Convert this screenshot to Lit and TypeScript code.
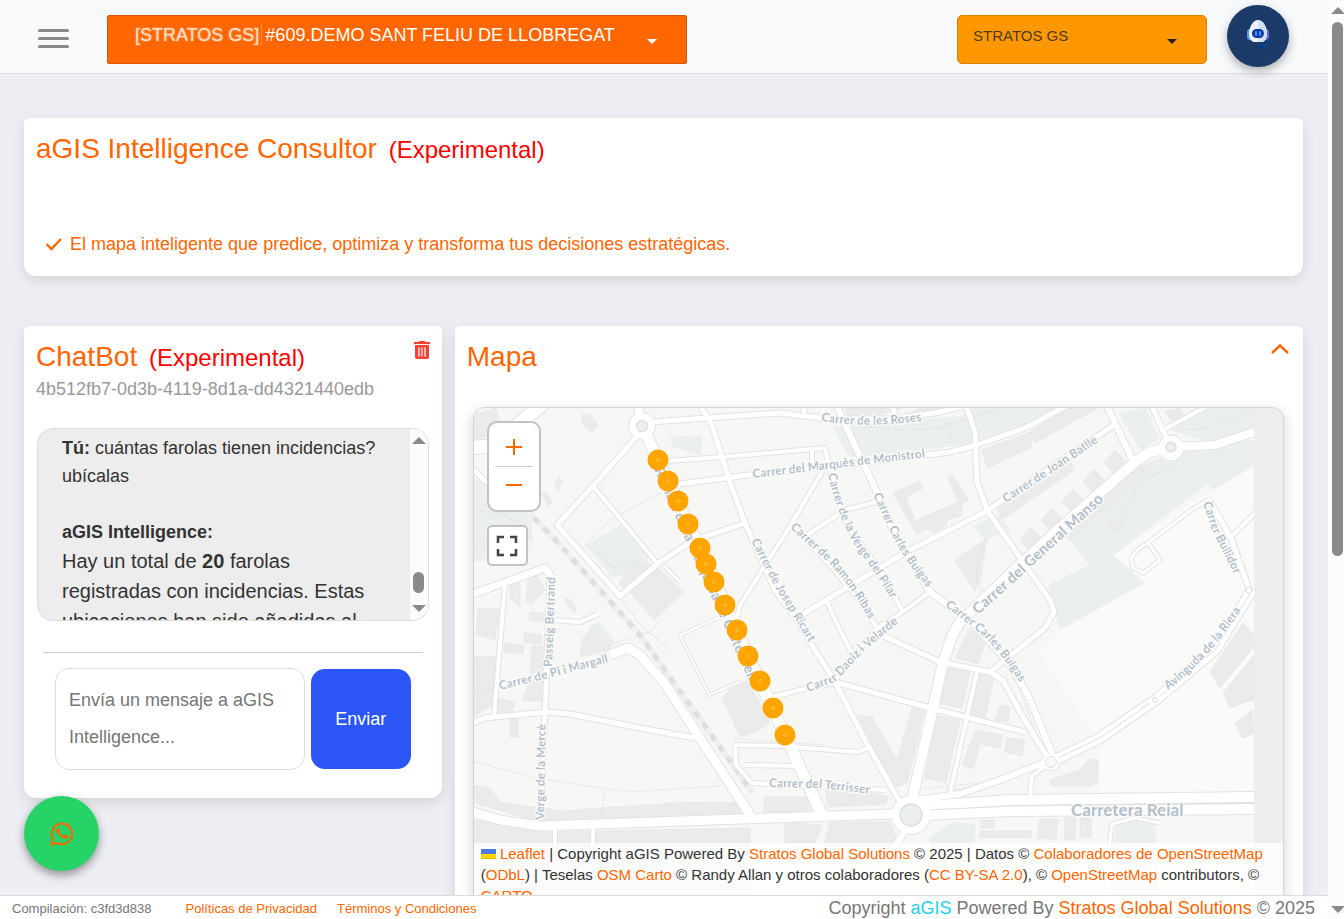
import { LitElement, html, svg, css } from "lit";
import { customElement } from "lit/decorators.js";

type Road = [width: number, d: string];
type Label = [size: number, text: string, d: string];

const PARKS = [
  "M474 478L500 490 532 522 532 540 512 556 474 562Z",
  "M585 545L620 525 650 556 640 575 612 577Z",
  "M670 437L702 435 701 455 688 452 672 446Z",
  "M832 426L858 425 962 416 968 408 1066 408 1030 427 977 443 862 457 848 456Z",
  "M1118 412L1146 408 1160 438 1140 450Z",
  "M1170 430L1208 408 1254 408 1254 430 1205 441Z",
  "M1190 449L1254 440 1254 466 1213 490 1208 484 1113 555 1145 583 1060 630 1048 585 1090 565 1070 540 1148 462Z",
  "M1116 822L1155 820 1160 906 1108 906Z",
  "M930 838L952 822 976 824 974 850 930 850Z",
  "M590 625L600 622 614 640 612 648 600 648Z",
  "M973 526L1000 515 1010 530 985 540Z",
];

const FIELD = "M1254 466L1213 490 1113 555 1145 583 1060 630 1040 654 1098 740 1100 792 1254 792Z";

const BUILDINGS = [
  "M474 444L474 415 496 408 501 426Z",
  "M582 415L590 414 598 425 592 432 582 424Z",
  "M555 485L559 477 563 483 557 491Z",
  "M541 494L547 493 552 502 548 506Z",
  "M655 565L683 592 654 620 630 592Z",
  "M619 583L636 561 650 564 642 575 624 588Z",
  "M748 680L770 722 757 732 740 737 722 698 730 690Z",
  "M478 608L500 608 495 640 476 634Z",
  "M510 585L520 583 520 608 510 598Z",
  "M528 578L538 576 545 590 532 604 526 602Z",
  "M564 600L568 598 577 608 574 613Z",
  "M530 612L547 614 545 622 529 620Z",
  "M504 643L524 645 523 654 504 652Z",
  "M524 633L542 635 542 644 524 642Z",
  "M532 646L545 646 542 701 522 700 530 680Z",
  "M474 656L496 656 492 705 474 716Z",
  "M498 698L515 702 512 712 496 712Z",
  "M510 716L518 716 518 737 510 737Z",
  "M582 640L592 627 612 650 580 657Z",
  "M474 785L490 788 500 802 560 811 600 808 690 802 745 803 748 815 540 822 474 803Z",
  "M474 820L540 832 750 828 752 906 474 906Z",
  "M845 408L902 408 875 416 848 416Z",
  "M912 412L920 408 962 408 925 415Z",
  "M893 493L920 481 923 488 906 497 915 521 958 502 948 477 952 474 969 500 962 503 962 515 947 520 947 525 935 532 925 529 917 535 910 523Z",
  "M955 560L987 538 980 580 975 591Z",
  "M982 450L1031 432 1032 447 987 468Z",
  "M1030 431L1070 408 1098 408 1035 443Z",
  "M995 505L1070 462 1074 470 1003 519Z",
  "M1031 527L1042 539 1031 551 1020 541Z",
  "M1052 508L1063 520 1052 532 1041 521Z",
  "M1073 489L1084 501 1073 513 1062 502Z",
  "M1094 469L1105 481 1094 493 1083 482Z",
  "M1115 450L1126 462 1115 474 1104 463Z",
  "M1066 536L1140 463 1147 467 1070 541Z",
  "M1110 524L1124 514 1126 518 1114 533Z",
  "M1165 412L1180 408 1184 416 1172 421Z",
  "M1243 623L1254 635 1254 647 1220 688 1210 672Z",
  "M1254 655L1254 700 1243 703 1230 708 1223 693Z",
  "M1235 723L1252 710 1254 733 1242 738Z",
  "M1050 780L1080 770 1090 759 1099 760 1097 783 1091 786 1050 786Z",
  "M857 715L872 717 897 760 912 708 925 710 907 783 897 787 890 780Z",
  "M937 716L960 720 946 783 925 778Z",
  "M946 666L970 672 962 708 941 704Z",
  "M975 672L994 677 985 719 970 714Z",
  "M1000 705L1010 707 1008 722 995 720Z",
  "M976 730L1003 735 1000 748 980 744 973 769 962 765Z",
  "M1006 738L1024 740 1022 756 1005 752Z",
  "M955 658L970 628 986 640 978 664Z",
  "M825 787L888 796 886 804 828 807Z",
  "M765 797L806 797 812 812 763 812Z",
  "M785 822L822 825 815 843 785 843Z",
  "M830 822L890 822 905 860 820 860Z",
  "M981 820L994 820 994 828 981 828Z",
  "M980 831L1031 831 1031 838 980 838Z",
  "M1040 819L1058 819 1056 840 1037 838Z",
  "M1065 818L1076 818 1075 840 1065 840Z",
  "M1080 818L1091 818 1091 837 1080 837Z",
];

const PATHS = [
  "M585 545L610 520 662 492",
  "M474 512L500 512 520 525 534 540 525 556 500 558",
  "M474 548L500 530 520 540",
  "M596 552L604 558 612 568 640 562",
  "M860 425L900 430 940 428 1000 408",
  "M945 422L955 445",
  "M1120 512L1145 480 1178 462",
  "M1180 430L1210 428 1254 408",
  "M987 540L978 560 976 580 990 602",
  "M474 762L540 779 630 792 720 786",
  "M605 790L600 820",
  "M610 645L650 632 660 622",
  "M735 738L780 742 825 745",
  "M955 790L990 782 1030 765",
  "M1020 690L1042 750",
  "M620 597L640 625 670 650",
  "M552 828L740 824",
  "M474 692L498 687",
  "M925 788L950 786 1010 780",
];

const ROADS: Road[] = [
  [13, "M466 448L492 446 545 402"],
  [5, "M470 466L484 480 530 512"],
  [8, "M637 402L641 420"],
  [5, "M650 422L750 415 780 413 828 419 890 419 935 413 972 404"],
  [5, "M804 402L804 413"],
  [5, "M638 435L593 486 557 525 620 596 660 562 692 541 745 523"],
  [4, "M593 486L657 563"],
  [3, "M664 566L680 582"],
  [5, "M698 402L712 425 722 457 732 488 745 523 775 590 797 620 815 650 835 682 865 740 900 802"],
  [4, "M668 461L722 457 825 448 829 466"],
  [4, "M812 449L812 466"],
  [5, "M680 484L740 476 860 463 950 452 977 445 1025 428 1070 404"],
  [4, "M829 464L838 500 850 530 880 570 903 612"],
  [6, "M835 402L857 450 876 490 895 535 930 592 975 625 1010 665 1028 695 1054 758"],
  [4, "M790 524L830 565 862 604 878 630"],
  [4, "M823 470L792 523 740 605 737 618"],
  [4, "M807 535L845 510 876 502"],
  [5, "M798 617L906 552 985 512 1040 475 1114 425"],
  [4, "M827 602L840 630 853 655"],
  [4, "M930 592L903 612 880 626 845 665 834 683 800 690 772 697"],
  [5, "M890 402L896 416"],
  [5, "M965 402L975 432 977 482 988 512 1050 600 1054 612 1045 628 990 672"],
  [10, "M1168 448L1150 452 1135 462 1060 528 1010 574 960 622 952 636 943 663 912 800"],
  [8, "M1174 447L1215 445 1254 432"],
  [6, "M1133 461L1105 402"],
  [5, "M1166 437L1150 402"],
  [4, "M1165 429L1215 402"],
  [5, "M1208 499L1214 508 1232 540 1250 592"],
  [4, "M1232 536L1262 506"],
  [3, "M1208 500L1190 511 1148 543 1160 560 1143 573 1133 568 1131 558 1138 549 1148 543"],
  [10, "M1252 590L1215 650 1158 698 1100 738 1051 762"],
  [5, "M875 632L940 662 990 672 1003 680 1020 712 1049 760"],
  [5, "M835 682L930 708 1025 732"],
  [4, "M977 672L950 793"],
  [6, "M915 800L960 794 1000 780 1051 760"],
  [4, "M1048 764L1032 776 1030 795"],
  [9, "M466 810L500 820 540 826 740 819 895 814"],
  [10, "M925 806L1010 800 1254 797"],
  [10, "M925 815L1010 811 1254 809"],
  [7, "M470 595L545 568 552 578"],
  [5, "M550 575L546 690 540 820"],
  [4, "M505 585L494 716"],
  [4, "M551 620L580 622 598 614"],
  [5, "M470 724L485 718 545 712 570 714 640 728 700 739"],
  [9, "M610 655L628 648 640 655 665 684 700 738 752 818"],
  [4, "M735 745L780 746 858 752 867 748"],
  [4, "M745 765L795 766"],
  [4, "M752 783L885 790"],
  [4, "M735 745L736 765 752 783"],
  [2, "M720 617L680 635 709 695 742 681"],
  [4, "M555 828L555 848"],
  [4, "M593 828L593 848"],
  [11, "M644 430L658 460 700 548 748 656 785 735 822 815"],
  [6, "M905 830L893 850"],
  [3, "M1109 850L1112 824 1135 818 1160 823"],
];

const LABELS: Label[] = [
  [12, "Carrer de les Roses", "M821 421Q875 430 945 417"],
  [12, "Carrer del Marquès de Monistrol", "M753 478L960 453"],
  [12, "Carrer de la Verge del Pilar", "M828 474Q838 520 858 550Q882 580 902 620"],
  [12, "Carrer Carles Buigas", "M873 495L892 535Q908 567 940 602"],
  [12, "Carrer de Ramon Ribas", "M790 528L830 564Q855 590 880 640"],
  [12, "Carrer de Josep Ricart", "M751 541L775 587 820 660"],
  [12, "Carrer Daoiz i Velarde", "M808 692L835 682 865 650 910 613"],
  [12, "Carrer Carles Buigas", "M945 606L980 633Q1005 655 1030 700"],
  [15, "Carrer del General Manso", "M978 615L1120 486"],
  [12, "Carrer de Joan Batlle", "M1006 503L1118 429"],
  [12, "Carrer Bullidor", "M1203 503L1212 530 1242 590"],
  [12, "Avinguda de la Riera", "M1168 690Q1215 655 1250 595"],
  [12, "Carrer de Pi i Margall", "M500 690L560 675 630 656"],
  [12, "Passeig Bertrand", "M552 667L556 560"],
  [12, "Verge de la Mercè", "M544 820L546 705"],
  [12, "Carrer del Terrisser", "M769 787L820 788 890 796"],
  [17, "Carretera Reial", "M1071 816L1230 816"],
  [14, "Rambla de la Marquesa de Castellbell", "M654 470L700 572 745 672 790 772"],
];

const POINTS = [
  [658, 460], [668, 481], [678, 501], [688, 524], [700, 548], [706, 564], [714, 582],
  [725, 605], [737, 630], [748, 656], [760, 681], [773, 708], [785, 735],
];

const scrollbarStyles = css`
  .bar {
    display: flex;
    flex-direction: column;
    align-items: center;
    background: #fcfcfc;
    box-sizing: border-box;
  }
  .up,
  .down {
    border: 7px solid transparent;
    width: 0;
    height: 0;
    box-sizing: border-box;
    flex: none;
  }
  .up {
    border-top: 0;
    border-bottom-color: #8a8a8a;
  }
  .down {
    border-bottom: 0;
    border-top-color: #8a8a8a;
  }
  .track {
    flex: 1;
    width: 11px;
    display: flex;
    flex-direction: column;
  }
  .thumb {
    background: #8a8a8a;
    border-radius: 6px;
  }
`;

@customElement("street-map")
class StreetMap extends LitElement {
  static styles = css`
    :host {
      display: block;
      position: relative;
      height: 498px;
      border: 1px solid #d4d4d4;
      border-radius: 12px;
      overflow: hidden;
      background: #eee;
      box-shadow: 0 4px 14px rgba(0, 0, 0, 0.18);
    }
    .canvas {
      display: block;
      width: 100%;
      height: 100%;
    }
    .label {
      font-family: Lato, "Open Sans", sans-serif;
      font-weight: 700;
      fill: #b3bfca;
      stroke: #fbfbfa;
      stroke-width: 3px;
      stroke-linejoin: round;
      paint-order: stroke;
    }
    .controls {
      position: absolute;
      left: 13px;
      top: 13px;
      display: grid;
      gap: 13px;
      justify-items: start;
    }
    .zoom {
      display: grid;
      width: 54px;
      height: 91px;
      box-sizing: border-box;
      border: 2px solid #c2c2c2;
      border-radius: 10px;
      background: #fff;
      padding: 6px;
      grid-template-rows: 1fr 1fr;
    }
    button {
      display: grid;
      place-items: center;
      border: 0;
      padding: 0;
      background: #fff;
      cursor: pointer;
    }
    .in {
      border-bottom: 1px solid #ccc;
    }
    .full {
      width: 41px;
      height: 41px;
      border: 2px solid #c2c2c2;
      border-radius: 5px;
    }
    .credits {
      position: absolute;
      left: 0;
      right: 0;
      bottom: 0;
      padding: 0 7px;
      background: rgba(255, 255, 255, 0.8);
      font-size: 15px;
      line-height: 21px;
      color: #333;
    }
    a {
      color: #f60;
      text-decoration: none;
    }
    .flag {
      width: 15px;
      height: 10px;
    }
  `;

  render() {
    return html`
      <svg class="canvas" viewBox="474 408 810 498" preserveAspectRatio="xMinYMin slice" role="img" aria-label="Mapa de farolas">
        <defs>
          <clipPath id="tiles"><rect x="474" y="408" width="780" height="498" /></clipPath>
        </defs>
        <g clip-path="url(#tiles)">
          <rect x="474" y="408" width="780" height="498" fill="#f7f7f5" />
          <path d=${FIELD} fill="#fafaf8" />
          ${PARKS.map((d) => svg`<path d=${d} fill="#ebf0ec"/>`)}
          ${BUILDINGS.map((d) => svg`<path d=${d} fill="#ebebeb" stroke="#e4e4e3" stroke-width=".6"/>`)}
          ${PATHS.map((d) => svg`<path d=${d} fill="none" stroke="#dededd" stroke-width="1.3" stroke-dasharray="1.5 2"/>`)}
          <path d="M524 508L560 545 640 635 752 792" fill="none" stroke="#f0f0ef" stroke-width="6" />
          <path d="M524 508L560 545 640 635 752 792" fill="none" stroke="#dfdfdf" stroke-width="5" stroke-dasharray="7 7" />
          <g fill="none" stroke="#e2e2e2" stroke-linejoin="round">
            ${ROADS.map(([w, d]) => svg`<path d=${d} stroke-width=${w + 2}/>`)}
            <circle cx="642" cy="426" r="13.5" fill="#fff" />
            <circle cx="1171" cy="448" r="13" fill="#fff" />
            <circle cx="911" cy="815" r="19.5" fill="#fff" />
            <circle cx="1051" cy="762" r="9" fill="#fff" />
          </g>
          <g fill="none" stroke="#fff" stroke-linejoin="round">
            ${ROADS.map(([w, d]) => svg`<path d=${d} stroke-width=${w}/>`)}
          </g>
          <circle cx="642" cy="426" r="12.5" fill="#fff" />
          <circle cx="1171" cy="448" r="12" fill="#fff" />
          <circle cx="911" cy="815" r="18.5" fill="#fff" />
          <g fill="none" stroke="#dedede">
            <path d="M1250 594L1215 650 1160 696M1150 703L1100 738 1058 758M930 810L1010 806 1254 803" />
            <circle cx="1155" cy="700" r="2.5" />
            <circle cx="1249" cy="590" r="3" />
            <circle cx="642" cy="426" r="5.5" fill="#ebf0ec" stroke-width="1.5" />
            <circle cx="1171" cy="447" r="5" fill="#ebf0ec" stroke-width="1.5" />
            <circle cx="911" cy="815" r="11" fill="#ebf0ec" stroke-width="1.5" />
            <circle cx="1051" cy="762" r="5.5" fill="#f9f9f8" />
          </g>
          ${LABELS.map(
            ([size, text, d], i) => svg`
              <path id=${"street" + i} d=${d} fill="none"/>
              <text class="label" font-size=${size}><textPath href=${"#street" + i}>${text}</textPath></text>`
          )}
        </g>
        ${POINTS.map(
          ([x, y]) => svg`<circle cx=${x} cy=${y} r="10.5" fill="#ffa500"/><circle cx=${x} cy=${y} r="2" fill="#f8b62a"/>`
        )}
      </svg>
      <div class="controls">
        <div class="zoom">
          <button class="in" aria-label="Acercar">
            <svg width="18" height="18"><path d="M9 1v16M1 9h16" stroke="#f60" stroke-width="2" /></svg>
          </button>
          <button aria-label="Alejar">
            <svg width="18" height="18"><path d="M1 9h16" stroke="#f60" stroke-width="2" /></svg>
          </button>
        </div>
        <button class="full" aria-label="Pantalla completa">
          <svg width="22" height="22" fill="none" stroke="#444" stroke-width="2.5">
            <path d="M2 8V2h6M14 2h6v6M20 14v6h-6M8 20H2v-6" />
          </svg>
        </button>
      </div>
      <div class="credits">
        <a href="#leaflet"
          ><svg class="flag" viewBox="0 0 15 10" aria-hidden="true">
            <path fill="#4c7be1" d="M0 0h15v5H0z" /><path fill="#ffd500" d="M0 5h15v4H0z" /><path fill="#e0bc00" d="M0 9h15v1H0z" /></svg
          > Leaflet</a>
        | Copyright aGIS Powered By <a href="#stratos">Stratos Global Solutions</a> © 2025 | Datos ©
        <a href="#osm">Colaboradores de OpenStreetMap</a> (<a href="#odbl">ODbL</a>) | Teselas
        <a href="#carto-osm">OSM Carto</a> © Randy Allan y otros colaboradores (<a href="#cc">CC BY-SA 2.0</a>), ©
        <a href="#openstreetmap">OpenStreetMap</a> contributors, © <a href="#carto">CARTO</a>
      </div>
    `;
  }
}

@customElement("chat-panel")
class ChatPanel extends LitElement {
  static styles = [
    scrollbarStyles,
    css`
      :host {
        display: block;
      }
      .log {
        display: flex;
        height: 191px;
        border: 1px solid #ddd;
        border-radius: 16px;
        overflow: hidden;
        background: #ededed;
      }
      .messages {
        flex: 1;
        min-width: 0;
        padding: 5px 20px 0 24px;
        color: #333;
      }
      p {
        margin: 0;
      }
      .mine {
        font-size: 18px;
        line-height: 28px;
        margin-bottom: 28px;
      }
      .author {
        font-size: 18px;
        line-height: 28px;
        font-weight: 700;
      }
      .answer {
        font-size: 20px;
        line-height: 30px;
      }
      .bar {
        width: 18px;
        padding: 8px 0;
      }
      .track {
        justify-content: flex-end;
        padding: 0 0 12px;
      }
      .thumb {
        height: 21px;
      }
      form {
        display: grid;
        grid-template-columns: minmax(0, 1fr) 100px;
        gap: 6px;
        align-items: center;
        margin: 31px 6px 0;
        padding: 15px 12px 0;
        border-top: 1px solid #ccc;
      }
      textarea {
        box-sizing: border-box;
        width: 100%;
        height: 102px;
        margin: 0;
        padding: 13px;
        border: 1px solid #ddd;
        border-radius: 14px;
        font: 18px/37px "Liberation Sans", Arial, sans-serif;
        resize: none;
        overflow: hidden;
        display: block;
      }
      textarea::placeholder {
        color: #757575;
      }
      .send {
        height: 100px;
        border: 0;
        border-radius: 14px;
        background: #2b55f5;
        color: #fff;
        font: 18px "Liberation Sans", Arial, sans-serif;
      }
    `,
  ];

  render() {
    return html`
      <div class="log">
        <div class="messages">
          <p class="mine"><b>Tú:</b> cuántas farolas tienen incidencias? ubícalas</p>
          <p class="author">aGIS Intelligence:</p>
          <p class="answer">Hay un total de <b>20</b> farolas registradas con incidencias. Estas ubicaciones han sido añadidas al</p>
        </div>
        <div class="bar" aria-hidden="true">
          <i class="up"></i><span class="track"><i class="thumb"></i></span><i class="down"></i>
        </div>
      </div>
      <form>
        <textarea aria-label="Mensaje" placeholder="Envía un mensaje a aGIS Intelligence..."></textarea>
        <button class="send" type="button">Enviar</button>
      </form>
    `;
  }
}

@customElement("app-root")
class AppRoot extends LitElement {
  static styles = [
    scrollbarStyles,
    css`
      :host {
        display: grid;
        grid-template-columns: minmax(0, 1fr) 16px;
        height: 100vh;
        overflow: hidden;
        font-family: "Liberation Sans", Arial, sans-serif;
        background: #eeeff4;
      }
      .page {
        display: flex;
        flex-direction: column;
        min-width: 0;
        height: 100vh;
      }
      header {
        display: flex;
        align-items: center;
        box-sizing: border-box;
        flex: none;
        height: 74px;
        padding: 0 39px 2px 38px;
        background: #f8f9fb;
        border-bottom: 1px solid #dcdde0;
      }
      button {
        border: 0;
        padding: 0;
        background: none;
        cursor: pointer;
      }
      .menu {
        display: grid;
        gap: 5px;
        width: 31px;
        margin: 6px 38px 0 0;
      }
      .menu i {
        height: 3px;
        border-radius: 2px;
        background: #888;
      }
      .picker {
        position: relative;
        display: flex;
        align-items: flex-start;
        box-sizing: border-box;
        height: 49px;
        margin-top: 8px;
        border: 1px solid #d95700;
        background: #f60;
        color: #fff;
        font-size: 18px;
      }
      .project {
        flex: 0 1 580px;
        padding: 8px 0 0 27px;
        border-radius: 2px;
      }
      .team {
        flex: 0 1 250px;
        margin-left: auto;
        padding: 9px 0 0 15px;
        border-color: #d98200;
        border-radius: 5px;
        background: #ff9800;
        color: #4c3a1c;
        font-size: 15px;
      }
      .prefix {
        line-height: 22px;
        color: #ffe0c8;
        text-shadow: 0 0 2px rgba(255, 255, 255, 0.6);
        margin-right: 3px;
        padding-right: 2px;
        border-right: 1px solid #ff8a3c;
      }
      select {
        appearance: none;
        flex: 1;
        min-width: 0;
        border: 0;
        padding: 0;
        background: none;
        color: inherit;
        font: inherit;
        line-height: 22px;
      }
      .picker::after {
        content: "";
        position: absolute;
        right: 29px;
        top: 23px;
        border: 5px solid transparent;
        border-top-color: currentColor;
        border-bottom: 0;
      }
      .team::after {
        border-top-color: #222;
      }
      .robot {
        flex: none;
        width: 62px;
        height: 62px;
        margin-left: 20px;
        border-radius: 50%;
        background: #1b3a68;
        box-shadow: 0 4px 10px rgba(0, 0, 0, 0.3);
      }
      main {
        flex: 1;
        min-height: 0;
        overflow: hidden;
        padding: 44px 25px 0 24px;
      }
      .card {
        position: relative;
        box-sizing: border-box;
        background: #fff;
        border-radius: 5px 5px 12px 12px;
        box-shadow: 0 4px 14px rgba(0, 0, 0, 0.12);
        padding: 13px 12px;
      }
      .intro {
        min-height: 158px;
        margin-bottom: 50px;
      }
      h1,
      h2 {
        margin: 0;
        font-weight: 400;
        font-size: 28px;
        line-height: 36px;
        color: #f60;
      }
      small {
        font-size: 24px;
        color: #f00;
        margin-left: 4px;
      }
      .claim {
        display: flex;
        align-items: center;
        gap: 7px;
        margin: 66px 0 0 9px;
        font-size: 18px;
        line-height: 20px;
        color: #f60;
      }
      .columns {
        display: grid;
        grid-template-columns: minmax(0, 33fr) minmax(0, 67fr);
        gap: 13px;
        align-items: start;
      }
      .session {
        margin: 1px 0 27px;
        font-size: 18px;
        line-height: 24px;
        color: #999;
      }
      .chat {
        min-height: 472px;
      }
      chat-panel {
        margin: 0 1px;
      }
      .map {
        padding-bottom: 30px;
      }
      .map street-map {
        margin: 32px 7px 0 6px;
      }
      .head {
        display: flex;
        justify-content: space-between;
        align-items: flex-start;
      }
      .head button {
        height: 24px;
      }
      .collapse {
        margin-right: 1px;
      }
      .whatsapp {
        position: absolute;
        left: 24px;
        bottom: 48px;
        display: grid;
        place-items: center;
        width: 75px;
        height: 75px;
        border-radius: 50%;
        background: #25d366;
        box-shadow: 0 4px 10px rgba(0, 0, 0, 0.4);
      }
      footer {
        flex: none;
        display: flex;
        align-items: center;
        box-sizing: border-box;
        height: 24px;
        padding: 1px 13px 0 12px;
        border-top: 1px solid #ddd;
        background: #fff;
        color: #777;
        font-size: 13px;
      }
      a {
        color: #f60;
        text-decoration: none;
      }
      .privacy {
        margin: 0 20px 0 34px;
      }
      .copyright {
        margin-left: auto;
        font-size: 18px;
      }
      .brand {
        color: #26d0f5;
      }
      .scroll {
        padding: 7px 0 6px 3px;
      }
      .scroll .track {
        padding: 8px 0;
      }
      .scroll .thumb {
        height: 61%;
      }
    `,
  ];

  render() {
    return html`
      <div class="page">
        <header>
          <button class="menu" aria-label="Menú"><i></i><i></i><i></i></button>
          <div class="picker project">
            <label class="prefix" for="project">[STRATOS GS]</label>
            <select id="project"><option>#609.DEMO SANT FELIU DE LLOBREGAT</option></select>
          </div>
          <div class="picker team">
            <select aria-label="Empresa"><option>STRATOS GS</option></select>
          </div>
          <button class="robot" aria-label="Asistente">
            <svg width="30" height="34" viewBox="0 0 30 34">
              <rect x="4" y="12" width="6" height="11" rx="3" fill="#4c9bff" />
              <rect x="20" y="12" width="6" height="11" rx="3" fill="#6a63d8" />
              <path d="M15 3c5 0 9 7 9 14 0 5-3 8-5 8h-8c-2 0-5-3-5-8 0-7 4-14 9-14z" fill="#eef3ff" />
              <path d="M15 3c5 0 9 7 9 14 0 5-3 8-5 8h-4z" fill="#d3def7" />
              <rect x="9" y="12" width="12" height="9" rx="4.5" fill="#0b3b9c" />
              <rect x="12" y="14" width="2" height="5" rx="1" fill="#4c8dff" />
              <rect x="16" y="14" width="2" height="5" rx="1" fill="#4c8dff" />
              <path d="M25 22c0 6-3 8-7 8" fill="none" stroke="#0a49a8" stroke-width="1.5" />
              <circle cx="18" cy="30" r="2.5" fill="#063a92" />
            </svg>
          </button>
        </header>
        <main>
          <section class="card intro">
            <h1>aGIS Intelligence Consultor <small>(Experimental)</small></h1>
            <p class="claim">
              <svg width="18" height="14" fill="none" stroke="#f60" stroke-width="2.4"><path d="M1.5 7l5 5L16 2" /></svg>
              El mapa inteligente que predice, optimiza y transforma tus decisiones estratégicas.
            </p>
          </section>
          <div class="columns">
            <section class="card chat">
              <div class="head">
                <h2>ChatBot <small>(Experimental)</small></h2>
                <button aria-label="Borrar conversación">
                  <svg width="16" height="18" viewBox="0 0 16 18">
                    <path fill="#f44336" d="M5 0h6v1h5v2H0V1h5zM1 4h14v12a2 2 0 0 1-2 2H3a2 2 0 0 1-2-2z" />
                    <path stroke="#fff" stroke-width="1.2" d="M5 6.500v9M8 6.500v9M11 6.500v9" />
                  </svg>
                </button>
              </div>
              <p class="session">4b512fb7-0d3b-4119-8d1a-dd4321440edb</p>
              <chat-panel></chat-panel>
            </section>
            <section class="card map">
              <div class="head">
                <h2>Mapa</h2>
                <button class="collapse" aria-label="Contraer">
                  <svg width="20" height="14" fill="none" stroke="#f60" stroke-width="2.400"><path d="M2 10l8-7.500 8 7.500" /></svg>
                </button>
              </div>
              <street-map></street-map>
            </section>
          </div>
        </main>
        <footer>
          <span>Compilación: c3fd3d838</span>
          <a class="privacy" href="#privacidad">Políticas de Privacidad</a>
          <a href="#terminos">Términos y Condiciones</a>
          <span class="copyright"
            >Copyright <span class="brand">aGIS</span> Powered By <a href="#stratos">Stratos Global Solutions</a> © 2025</span
          >
        </footer>
      </div>
      <div class="bar scroll" aria-hidden="true">
        <i class="up"></i><span class="track"><i class="thumb"></i></span><i class="down"></i>
      </div>
      <a class="whatsapp" href="#whatsapp" aria-label="WhatsApp">
        <svg width="24" height="24" viewBox="0 0 24 24" fill="none">
          <path d="M1.500 22.500l1.400-5.700A10.300 10.300 0 1 1 7.200 21z" stroke="#f60" stroke-width="2" />
          <path
            fill="#f60"
            d="M8.500 6.700c-.3-.6-.6-.6-1-.6-.9 0-1.700 1-1.700 2.300 0 1.400 1 2.700 1.200 2.900 1.400 2.100 3.200 3.800 5.600 4.700 2.200.9 3.300.7 4 .4.900-.4 1.500-1.100 1.600-2 0-.4 0-.7-.3-.8l-2.300-1.100c-.3-.1-.6-.1-.8.2l-.9 1.100c-.2.2-.4.3-.7.1-1.700-.8-2.800-1.700-3.900-3.400-.2-.3-.1-.5.1-.7.4-.5.7-.9.8-1.200.1-.2 0-.3 0-.5z"
          />
        </svg>
      </a>
    `;
  }
}
